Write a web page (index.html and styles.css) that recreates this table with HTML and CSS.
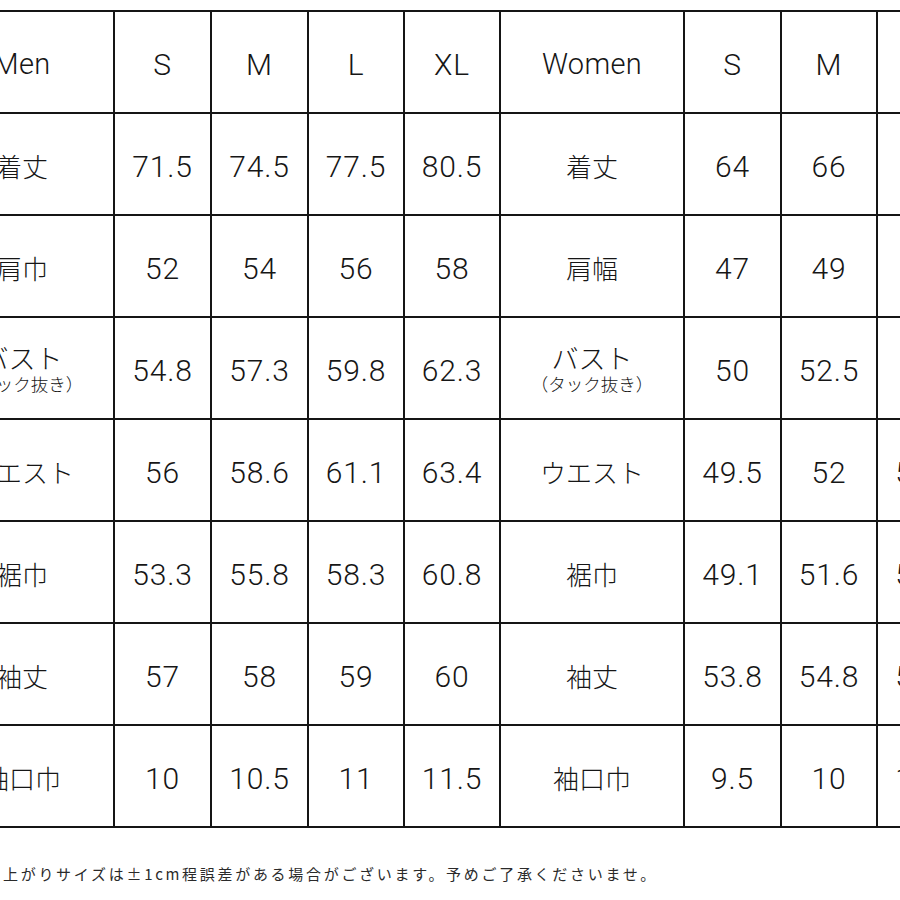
FILE: index.html
```html
<!DOCTYPE html>
<html lang="ja">
<head>
<meta charset="utf-8">
<title>サイズ表</title>
<link rel="stylesheet" href="styles.css">
</head>
<body>
<div class="page">
  <table class="size-table">
    <colgroup>
      <col class="c-label"><col class="c-size"><col class="c-size"><col class="c-size-n"><col class="c-size-n">
      <col class="c-label"><col class="c-size"><col class="c-size-n"><col class="c-size"><col class="c-size">
    </colgroup>
    <tr>
      <td class="head">Men</td><td>S</td><td>M</td><td>L</td><td>XL</td>
      <td class="head">Women</td><td>S</td><td>M</td><td>L</td><td>XL</td>
    </tr>
    <tr>
      <td class="label">着丈</td><td>71.5</td><td>74.5</td><td>77.5</td><td>80.5</td>
      <td class="label">着丈</td><td>64</td><td>66</td><td>68</td><td>70</td>
    </tr>
    <tr>
      <td class="label">肩巾</td><td>52</td><td>54</td><td>56</td><td>58</td>
      <td class="label">肩幅</td><td>47</td><td>49</td><td>51</td><td>53</td>
    </tr>
    <tr>
      <td class="label"><div class="bust">バスト</div><div class="note">（タック抜き）</div></td><td>54.8</td><td>57.3</td><td>59.8</td><td>62.3</td>
      <td class="label"><div class="bust">バスト</div><div class="note">（タック抜き）</div></td><td>50</td><td>52.5</td><td>55</td><td>57.5</td>
    </tr>
    <tr>
      <td class="label">ウエスト</td><td>56</td><td>58.6</td><td>61.1</td><td>63.4</td>
      <td class="label">ウエスト</td><td>49.5</td><td>52</td><td>54.5</td><td>57</td>
    </tr>
    <tr>
      <td class="label">裾巾</td><td>53.3</td><td>55.8</td><td>58.3</td><td>60.8</td>
      <td class="label">裾巾</td><td>49.1</td><td>51.6</td><td>54.1</td><td>56.6</td>
    </tr>
    <tr>
      <td class="label">袖丈</td><td>57</td><td>58</td><td>59</td><td>60</td>
      <td class="label">袖丈</td><td>53.8</td><td>54.8</td><td>55.8</td><td>56.8</td>
    </tr>
    <tr>
      <td class="label">袖口巾</td><td>10</td><td>10.5</td><td>11</td><td>11.5</td>
      <td class="label">袖口巾</td><td>9.5</td><td>10</td><td>10.5</td><td>11</td>
    </tr>
  </table>
  <p class="footnote">上がりサイズは±1cm程誤差がある場合がございます。予めご了承くださいませ。</p>
</div>
</body>
</html>
```

FILE: styles.css
```css
html, body {
  margin: 0;
  padding: 0;
  background: #ffffff;
  overflow: hidden;
}

.page {
  width: 900px;
  height: 900px;
  overflow: hidden;
  padding-top: 10px;
  box-sizing: border-box;
}

.size-table {
  border-collapse: collapse;
  table-layout: fixed;
  width: 1140px;
  margin-left: -71px;
  font-family: "Roboto", "Liberation Sans", "Noto Sans CJK JP", sans-serif;
  font-weight: 300;
  color: #161616;
}

.c-label { width: 184px; }
.c-size { width: 97px; }
.c-size-n { width: 96px; }

.size-table td {
  border: 2.5px solid #151515;
  height: 102px;
  padding: 4px 0 0 0;
  box-sizing: border-box;
  text-align: center;
  vertical-align: middle;
  font-size: 30px;
  letter-spacing: 0.8px;
  white-space: nowrap;
  overflow: hidden;
}

.size-table td.head {
  font-size: 29px;
  letter-spacing: 0.3px;
}

.size-table td.label {
  font-family: "Noto Sans CJK JP", sans-serif;
  font-weight: 300;
  font-size: 26px;
  letter-spacing: 0;
  padding-top: 3px;
}

.bust {
  font-size: 27px;
  line-height: 28px;
}

.note {
  font-size: 17.5px;
  line-height: 24px;
}

.footnote {
  margin: 35px 0 0 3px;
  font-family: "Noto Sans CJK JP", sans-serif;
  font-size: 15px;
  line-height: 22px;
  letter-spacing: 2.7px;
  color: #2a2a2a;
  white-space: nowrap;
}
```
